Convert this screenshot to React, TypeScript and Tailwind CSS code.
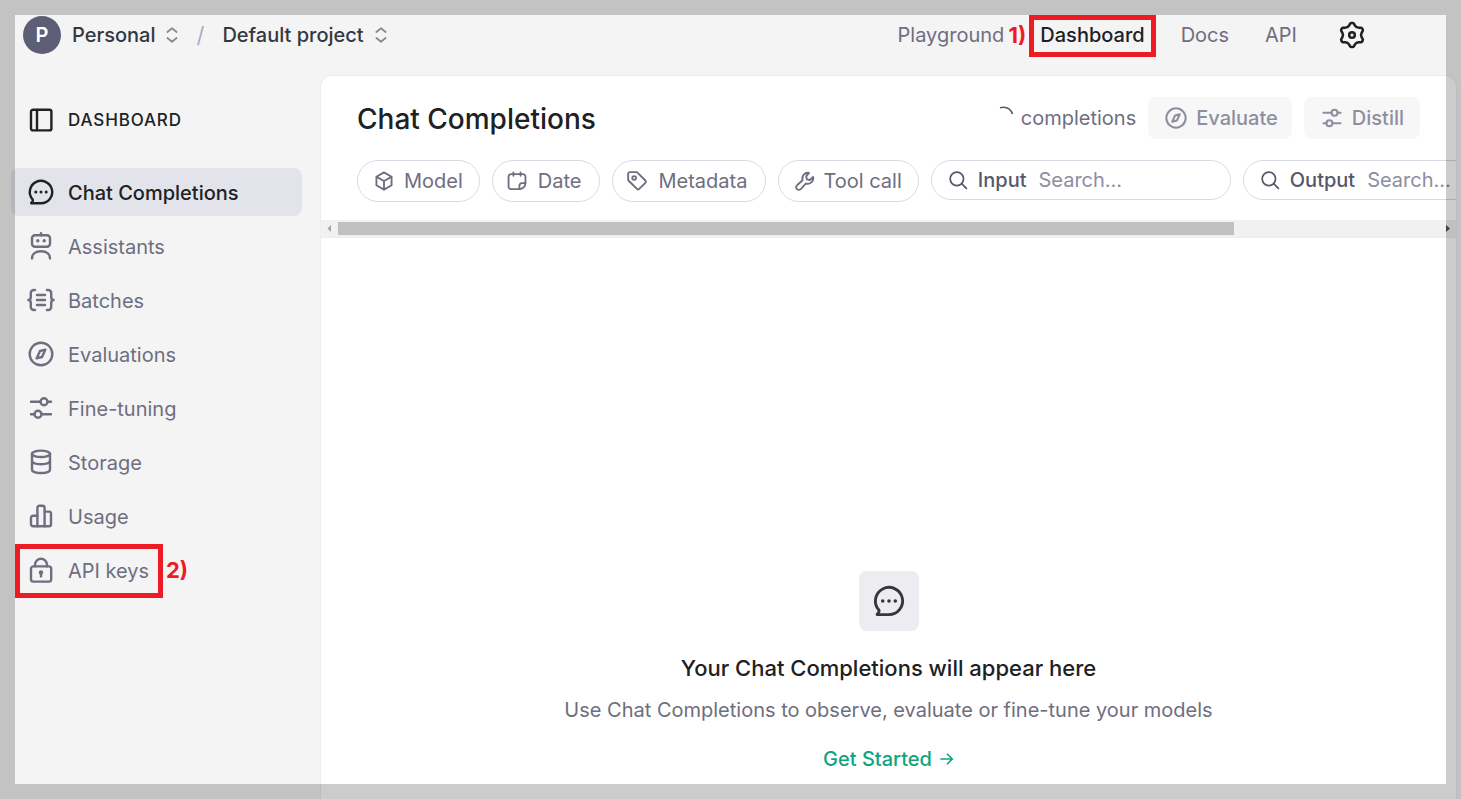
import { ReactNode } from "react";

interface IconProps {
  className?: string;
  strokeWidth?: number;
}

const Icon = ({
  className = "size-7",
  strokeWidth = 2.4,
  children,
}: IconProps & { children: ReactNode }) => (
  <svg
    viewBox="0 0 28 28"
    fill="none"
    stroke="currentColor"
    strokeWidth={strokeWidth}
    strokeLinecap="round"
    strokeLinejoin="round"
    aria-hidden="true"
    className={`shrink-0 ${className}`}
  >
    {children}
  </svg>
);

const ChatIcon = (props: IconProps) => (
  <Icon {...props}>
    <path d="M14 25.2a11.2 11.2 0 1 0-8.4-3.8c.4.5.4 1 .1 1.5L4.2 25.2h9.8z" />
    <g fill="currentColor" stroke="none">
      <circle cx="8.8" cy="14" r="1.5" />
      <circle cx="14" cy="14" r="1.5" />
      <circle cx="19.2" cy="14" r="1.5" />
    </g>
  </Icon>
);

const PanelIcon = (props: IconProps) => (
  <Icon {...props}>
    <rect x="4" y="3.8" width="20.4" height="20.6" rx="2" />
    <path d="M10 4v20" />
  </Icon>
);

const AssistantIcon = (props: IconProps) => (
  <Icon {...props}>
    <path d="M14 1.2v2" />
    <rect x="5" y="3.2" width="18" height="11.6" rx="3" />
    <g fill="currentColor" stroke="none">
      <circle cx="10.8" cy="8.8" r="1.7" />
      <circle cx="17.2" cy="8.8" r="1.7" />
    </g>
    <path d="M5 26.4c0-4.4 3.6-7.2 9-7.2s9 2.8 9 7.2" />
  </Icon>
);

const BatchIcon = (props: IconProps) => (
  <Icon {...props}>
    <path d="M8 4H6.8a3 3 0 0 0-3 3v3.8c0 1.8-.9 3.2-2.4 3.2 1.5 0 2.4 1.4 2.4 3.2V21a3 3 0 0 0 3 3H8" />
    <path d="M20 4h1.2a3 3 0 0 1 3 3v3.8c0 1.8.9 3.2 2.4 3.2-1.5 0-2.4 1.4-2.4 3.2V21a3 3 0 0 1-3 3H20" />
    <path d="M10 9h8M10 14h8M10 19h8" />
  </Icon>
);

const CompassIcon = (props: IconProps) => (
  <Icon {...props}>
    <circle cx="14" cy="14" r="11.3" />
    <path d="M18.4 9.6l-5.4 1.4-3.4 7.4 5.4-1.4z" />
  </Icon>
);

const SlidersIcon = (props: IconProps) => (
  <Icon {...props}>
    <path d="M4 7.8h9.4M20.6 7.8H24M4 20.2h3.4M14.6 20.2H24" />
    <circle cx="17" cy="7.8" r="3.5" />
    <circle cx="11" cy="20.2" r="3.5" />
  </Icon>
);

const StorageIcon = (props: IconProps) => (
  <Icon {...props}>
    <ellipse cx="14" cy="5.8" rx="9" ry="3.2" />
    <path d="M5 5.8v16c0 1.8 4 3.2 9 3.2s9-1.4 9-3.2v-16" />
    <path d="M5 13c0 1.8 4 3.2 9 3.2s9-1.4 9-3.2" />
  </Icon>
);

const UsageIcon = (props: IconProps) => (
  <Icon {...props}>
    <path d="M10.4 24.2H6a2 2 0 0 1-2-2v-6.4a2 2 0 0 1 2-2h4.4" />
    <path d="M10.4 24.2V5.8a2 2 0 0 1 2-2h3.2a2 2 0 0 1 2 2v18.4z" />
    <path d="M17.6 9.6H22a2 2 0 0 1 2 2v10.6a2 2 0 0 1-2 2h-4.4" />
  </Icon>
);

const LockIcon = (props: IconProps) => (
  <Icon {...props}>
    <rect x="4" y="10.4" width="20.2" height="15.2" rx="2.4" />
    <path d="M8 10.2V8.8a6 6 0 0 1 12 0v1.4" />
    <circle cx="14" cy="16.4" r="2.2" fill="currentColor" stroke="none" />
    <path d="M14 17v3.4" />
  </Icon>
);

const CubeIcon = (props: IconProps) => (
  <Icon {...props}>
    <path d="M14 2L24.6 8v12L14 26 3.4 20V8z" />
    <path d="M3.6 8.2L14 14l10.4-5.8M14 14v12" />
  </Icon>
);

const CalendarIcon = (props: IconProps) => (
  <Icon {...props}>
    <path d="M17.4 25.4H5.6a3.4 3.4 0 0 1-3.4-3.4V7.800a3.4 3.4 0 0 1 3.4-3.4h16.8a3.4 3.4 0 0 1 3.4 3.4V17" />
    <path d="M9 2v4.6M19 2v4.6" />
    <path d="M17.4 25.4v-5a3.4 3.4 0 0 1 3.4-3.4h5c0 4.6-3.8 8.4-8.4 8.4z" />
  </Icon>
);

const TagIcon = (props: IconProps) => (
  <Icon {...props}>
    <path d="M1.6 3.8a2.200 2.200 0 0 1 2.200-2.200h9.200a2.400 2.400 0 0 1 1.700.7l11 11a2.200 2.200 0 0 1 0 3.200l-8.600 8.600a2.200 2.200 0 0 1-3.100 0L2.300 13.600a2.400 2.400 0 0 1-.7-1.700z" />
    <circle cx="10" cy="9.800" r="2.600" />
  </Icon>
);

const WrenchIcon = (props: IconProps) => (
  <Icon {...props}>
    <path d="M19.600 2.600a8 8 0 0 0-9 10.400l-7.400 6.600a3.800 3.800 0 1 0 5.300 5.300l6.600-7.400a8 8 0 0 0 10.300-9.100l-4.600 4.200-4.200-.9-.9-4.200z" />
  </Icon>
);

const SearchIcon = (props: IconProps) => (
  <Icon {...props}>
    <circle cx="12.4" cy="12.4" r="9.4" />
    <path d="M19.4 19.4l6.4 6.4" />
  </Icon>
);

const GearIcon = () => (
  <svg
    viewBox="0 0 24 24"
    fill="none"
    stroke="currentColor"
    strokeWidth="1.8"
    strokeLinejoin="round"
    aria-hidden="true"
    className="size-[34px]"
  >
    <path d="M11.568 3.5a1 1 0 0 0-.863.494l-.811 1.381A3 3 0 0 1 7.33 6.856l-1.596.013a1 1 0 0 0-.858.501l-.439.761a1 1 0 0 0-.004.992l.792 1.4a3 3 0 0 1 0 2.954l-.792 1.4a1 1 0 0 0 .004.992l.439.76a1 1 0 0 0 .858.502l1.596.013a3 3 0 0 1 2.564 1.48l.811 1.382a1 1 0 0 0 .863.494h.87a1 1 0 0 0 .862-.494l.812-1.381a3 3 0 0 1 2.563-1.481l1.596-.013a1 1 0 0 0 .859-.501l.438-.761a1 1 0 0 0 .004-.992l-.792-1.4a3 3 0 0 1 0-2.954l.793-1.4a1 1 0 0 0-.005-.992l-.438-.76a1 1 0 0 0-.859-.502l-1.596-.013a3 3 0 0 1-2.563-1.48l-.812-1.382a1 1 0 0 0-.862-.494z" />
    <circle cx="12" cy="12" r="2" />
  </svg>
);

const UpDownIcon = () => (
  <svg
    viewBox="0 0 12 16"
    fill="none"
    stroke="currentColor"
    strokeWidth="1.8"
    strokeLinecap="round"
    strokeLinejoin="round"
    aria-hidden="true"
    className="h-4 w-3 text-[#8a8a8f]"
  >
    <path d="M1.4 5L6 1.2 10.6 5M1.4 11L6 14.8 10.6 11" />
  </svg>
);

const navItems = [
  { label: "Chat Completions", icon: ChatIcon, active: true },
  { label: "Assistants", icon: AssistantIcon },
  { label: "Batches", icon: BatchIcon },
  { label: "Evaluations", icon: CompassIcon },
  { label: "Fine-tuning", icon: SlidersIcon },
  { label: "Storage", icon: StorageIcon },
  { label: "Usage", icon: UsageIcon },
  { label: "API keys", icon: LockIcon, step: "2)" },
];

const filters = [
  { label: "Model", icon: CubeIcon, spacing: "gap-2.5 px-4" },
  { label: "Date", icon: CalendarIcon, spacing: "gap-[11px] pl-3.5 pr-[18px]" },
  { label: "Metadata", icon: TagIcon, spacing: "gap-[11px] pl-3.5 pr-[18px]" },
  { label: "Tool call", icon: WrenchIcon, spacing: "gap-2 px-4" },
];

const Header = () => (
  <header className="flex h-[75px] shrink-0 items-center justify-between pr-[92px] pb-1.5 pl-[23px] font-medium text-[#353740]">
    <div className="flex items-center">
      <span className="mr-[11px] flex size-[38px] items-center justify-center rounded-full bg-[#5d5d75] font-semibold text-white">
        P
      </span>
      <button className="flex items-center gap-[11px]">
        Personal
        <UpDownIcon />
      </button>
      <span className="mx-[18px] text-[22px] font-normal text-[#acacbe]">
        /
      </span>
      <button className="flex items-center gap-[11px]">
        Default project
        <UpDownIcon />
      </button>
    </div>

    <nav className="flex items-center gap-9 font-normal text-[#6e6e80]">
      <a href="#playground">Playground</a>
      <a href="#dashboard" className="relative font-medium text-[#202123]">
        Dashboard
        <span className="absolute -inset-x-[11px] -top-[5px] -bottom-[7px] border-[5px] border-[#ed1c24]" />
        <span className="absolute top-0 right-full mr-3.5 text-[22px] font-bold text-[#ed1c24]">
          1)
        </span>
      </a>
      <a href="#docs">Docs</a>
      <a href="#api">API</a>
      <button aria-label="Settings" className="ml-0.5 text-[#202123]">
        <GearIcon />
      </button>
    </nav>
  </header>
);

const Sidebar = () => (
  <aside className="w-[320px] shrink-0 pr-[18px] pl-[11px]">
    <div className="flex h-[90px] items-center gap-[13px] pl-4 text-[#202123]">
      <button aria-label="Collapse sidebar">
        <PanelIcon />
      </button>
      <h2 className="text-[17px] font-medium tracking-wider">DASHBOARD</h2>
    </div>
    <nav className="mt-[3px] flex flex-col gap-1.5">
      {navItems.map(({ label, icon: NavIcon, active, step }) => (
        <a
          key={label}
          href="#"
          className={`relative flex h-12 items-center gap-[13px] rounded-lg pl-4 ${
            active
              ? "bg-[#e3e3eb] font-medium text-[#202123]"
              : "text-[#6e6e80]"
          }`}
        >
          <NavIcon />
          <span className="pt-0.5">{label}</span>
          {step && (
            <>
              <span className="absolute -top-0.5 -bottom-1 left-1 w-[148px] border-[5px] border-[#ed1c24]" />
              <span className="absolute left-[155px] text-[22px] font-bold text-[#ed1c24]">
                {step}
              </span>
            </>
          )}
        </a>
      ))}
    </nav>
  </aside>
);

const SearchField = ({ label }: { label: string }) => (
  <label className="flex h-10 w-[300px] shrink-0 items-center rounded-full border border-[#d9d9e3] px-4 font-medium text-[#565869]">
    <SearchIcon className="size-5" strokeWidth={2.4} />
    <span className="ml-2.5">{label}</span>
    <input
      type="text"
      placeholder="Search..."
      className="ml-3 w-full min-w-0 bg-transparent font-normal outline-none placeholder:text-[#8e8ea0]"
    />
  </label>
);

const ScrollBar = () => (
  <div className="flex h-[18px] items-center border-b border-[#ececf1] bg-[#f1f1f1]">
    <svg viewBox="0 0 17 17" className="size-[17px] shrink-0" aria-hidden="true">
      <path d="M10 5v7L6.5 8.5z" fill="#a3a3a3" />
    </svg>
    <div className="h-[13px] flex-1">
      <div className="h-full w-[81.4%] bg-[#c1c1c1]" />
    </div>
    <svg viewBox="0 0 17 17" className="size-[17px] shrink-0" aria-hidden="true">
      <path d="M7 5v7l4-3.5z" fill="#505050" />
    </svg>
  </div>
);

const EmptyState = () => (
  <section className="flex flex-col items-center pt-[333px] text-center">
    <div className="flex size-[60px] items-center justify-center rounded-lg bg-[#ececf1] text-[#353740]">
      <ChatIcon className="size-[34px]" strokeWidth={2.4} />
    </div>
    <h2 className="mt-[21px] text-[22px] leading-8 font-medium text-[#202123]">
      Your Chat Completions will appear here
    </h2>
    <p className="mt-[11px] text-[#6e6e80]">
      Use Chat Completions to observe, evaluate or fine-tune your models
    </p>
    <a
      href="#get-started"
      className="mt-[19px] flex items-center gap-2 font-medium text-[#10a37f]"
    >
      Get Started
      <Icon className="size-3.5" strokeWidth={3.4}>
        <path d="M2 14h23M15 4.500l9.500 9.500-9.500 9.500" />
      </Icon>
    </a>
  </section>
);

const App = () => (
  <div className="flex h-screen flex-col overflow-hidden bg-[#f4f4f4] font-['Inter',sans-serif] text-[20px] leading-[30px]">
    <Header />
    <div className="flex min-h-0 flex-1">
      <Sidebar />
      <main className="mr-1 min-w-0 flex-1 overflow-hidden rounded-t-xl border border-b-0 border-[#ececf1] bg-white">
        <div className="flex items-center gap-3 pt-[21px] pr-9 pl-9">
          <h1 className="flex-1 pt-0.5 text-[28px] leading-10 font-medium text-[#202123]">
            Chat Completions
          </h1>
          <div className="flex items-center gap-1.5 text-[#6e6e80]">
            <svg
              viewBox="0 0 16 24"
              fill="none"
              stroke="#565869"
              strokeWidth="1.6"
              className="h-6 w-4"
              aria-hidden="true"
            >
              <path d="M1 1.8c6-1.6 10.5 1.2 12.6 6.2" />
            </svg>
            completions
          </div>
          <button
            disabled
            className="flex h-[42px] items-center gap-2 rounded-lg bg-[#f7f7f7] pr-3.5 pl-4 font-medium text-[#8e8ea0]"
          >
            <CompassIcon className="size-6" />
            Evaluate
          </button>
          <button
            disabled
            className="flex h-[42px] items-center gap-2 rounded-lg bg-[#f7f7f7] px-4 font-medium text-[#8e8ea0]"
          >
            <SlidersIcon className="size-6" />
            Distill
          </button>
        </div>

        <div className="mt-[21px] flex h-[60px] gap-3 overflow-hidden pl-9">
          {filters.map(({ label, icon: FilterIcon, spacing }) => (
            <button
              key={label}
              className={`flex h-[42px] shrink-0 items-center rounded-full border border-[#d9d9e3] text-[#6e6e80] ${spacing}`}
            >
              <FilterIcon className="size-5" strokeWidth={2.6} />
              {label}
            </button>
          ))}
          <SearchField label="Input" />
          <SearchField label="Output" />
        </div>

        <ScrollBar />
        <EmptyState />
      </main>
    </div>
    {/* Dimmed frame around the whole page */}
    <div className="pointer-events-none fixed inset-0 border-[15px] border-black/20" />
  </div>
);

export default App;
